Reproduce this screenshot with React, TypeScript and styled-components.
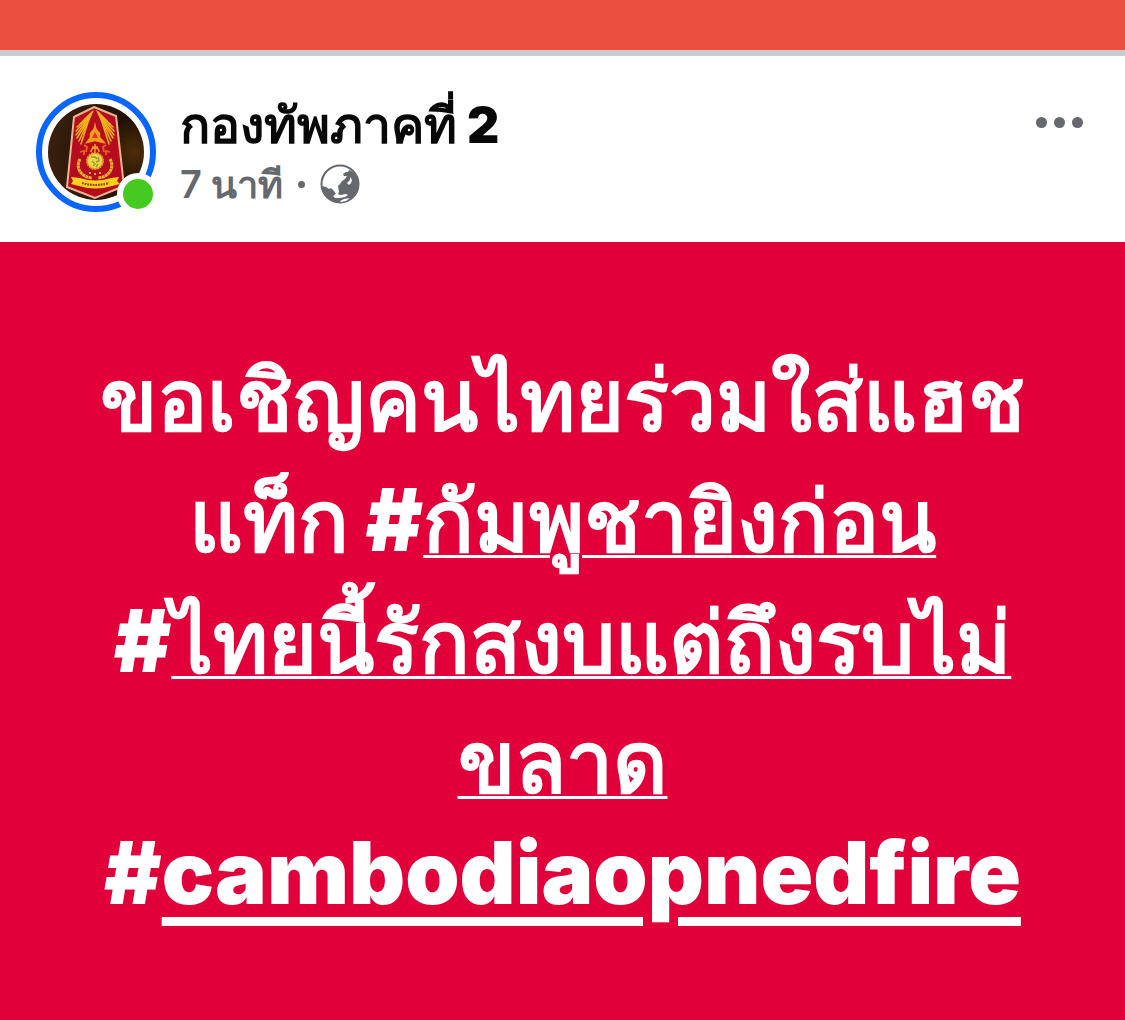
import React from "react";
import styled, { createGlobalStyle } from "styled-components";

const GlobalStyle = createGlobalStyle`
  *, *::before, *::after { box-sizing: border-box; }
  body {
    margin: 0;
    background: #ffffff;
    font-family: Inter, Waree, sans-serif;
  }
`;

const Page = styled.div`
  display: flex;
  flex-direction: column;
  min-height: 100vh;
`;

const TopBanner = styled.div`
  height: 56px;
  background: #eb4f3f;
  border-bottom: 6px solid #c9cbd0;
`;

const Post = styled.article`
  flex: 1;
  display: flex;
  flex-direction: column;
`;

const PostHeader = styled.header`
  display: flex;
  align-items: flex-start;
  gap: 24px;
  padding: 36px 36px 30px;
`;

const AvatarLink = styled.a`
  position: relative;
  flex: none;
  display: block;
  width: 120px;
  height: 120px;
  padding: 6px;
  border: 6px solid #0866ff;
  border-radius: 50%;

  svg { display: block; width: 100%; height: 100%; }
`;

const OnlineBadge = styled.span`
  position: absolute;
  right: -9px;
  bottom: -9px;
  width: 42px;
  height: 42px;
  border: 6px solid #ffffff;
  border-radius: 50%;
  background: #45cb20;
`;

const Author = styled.div`
  flex: 1;
  min-width: 0;
`;

const Name = styled.h1`
  margin: 0;
  font-size: 50px;
  font-weight: 900;
  line-height: 66px;
  white-space: nowrap;

  a { color: #080809; text-decoration: none; }
`;

const Meta = styled.div`
  display: flex;
  align-items: center;
  gap: 15px;
  color: #65686c;
  font-size: 38px;
  font-weight: 600;
  line-height: 52px;
  white-space: nowrap;

  svg { width: 40px; height: 40px; }
`;

const Dot = styled.span`
  width: 7px;
  height: 7px;
  border-radius: 50%;
  background: currentColor;
`;

const MenuButton = styled.button`
  display: flex;
  align-items: center;
  gap: 7px;
  height: 60px;
  padding: 0 6px;
  border: 0;
  background: none;
  color: #65686c;
`;

const MenuDot = styled.span`
  width: 11px;
  height: 11px;
  border-radius: 50%;
  background: currentColor;
`;

const PostBody = styled.section`
  flex: 1;
  display: flex;
  flex-direction: column;
  justify-content: center;
  background: #e1003a;
  color: #ffffff;
  text-align: center;
`;

const Message = styled.p`
  margin: 0;
  padding-top: 2px;
  font-size: 84px;
  font-weight: 900;
`;

const Line = styled.span<{ $height: number }>`
  display: block;
  line-height: ${(p) => p.$height}px;
  white-space: nowrap;
`;

const HashTag = styled.a<{ $latin?: boolean }>`
  color: inherit;
  font-size: ${(p) => (p.$latin ? 87 : 84)}px;
  text-decoration: none;

  u {
    text-decoration-line: underline;
    text-decoration-thickness: ${(p) => (p.$latin ? 9 : 3)}px;
    text-underline-offset: ${(p) => (p.$latin ? 13 : 4)}px;
  }
`;

const Hash = styled.span`
  font-size: 87px;
`;

const featherTips = [
  [12, 17], [15, 20], [18, 23], [19, 27], [19, 31], [18, 34], [16, 37], [14, 40],
];

function Wing() {
  return (
    <g stroke="#f3b21c" strokeLinecap="round">
      {featherTips.map(([x, y], n) => (
        <path key={n} strokeWidth="1.500" d={`M${-3 - n * 0.5} ${8 + n * 1.2} L${-x} ${y}`} />
      ))}
      <path d="M-2 7-10 15-7 17z" fill="#f3b21c" strokeWidth="1" />
    </g>
  );
}

function Emblem() {
  return (
    <svg viewBox="0 0 96 96" role="img" aria-label="กองทัพภาคที่ 2">
      <defs>
        <clipPath id="round"><circle cx="48" cy="48" r="48" /></clipPath>
        <radialGradient id="wood" cx="0.9" cy="0.5" r="0.9">
          <stop offset="0" stopColor="#4d2d0a" />
          <stop offset="0.4" stopColor="#201004" />
          <stop offset="1" stopColor="#3a200e" />
        </radialGradient>
      </defs>
      <g clipPath="url(#round)">
        <rect width="96" height="96" fill="url(#wood)" />
        <path d="M46 3 68 12 76 82 47 94 19 83 26 13Z" fill="#b50d1f" stroke="#f0b48c" strokeWidth="2" />
        <g transform="translate(47 0)"><Wing /></g>
        <g transform="translate(47 0) scale(-1 1)"><Wing /></g>
        <path d="M47 14 49 24 53 29 53 33 57 37 59 41 47 38 35 41 38 37 41 33 41 29 45 24Z" fill="#f79c1c" stroke="#b50d1f" strokeWidth="1.500" />
        <path d="M47 28 44 34 50 34Z" fill="#d93520" />
        <path d="M47 40v8M44 43h6M43 48c0-3 2-4 4-4s4 1 4 4" fill="none" stroke="#f0a022" strokeWidth="1.500" />
        <path d="M36 41l3 2-1 5M58 41l-3 2 1 5M32 48l4-1v4M62 48l-4-1v4" fill="none" stroke="#e8641e" strokeWidth="1.800" />
        <g fill="none" stroke="#eab02c" strokeWidth="3" strokeDasharray="3 0.4">
          <path d="M32 55C27 64 33 73 44 74" />
          <path d="M62 55C67 64 61 73 50 74" />
        </g>
        <circle cx="47" cy="57" r="8" fill="#f2d247" stroke="#e09a1c" strokeWidth="2" strokeDasharray="2 0.8" />
        <path d="M43 53h4l2 2M50 53l1 4-3 1M44 57l3 3-2 2M50 60l-2 3" fill="none" stroke="#8f9a2c" strokeWidth="1.400" />
        <circle cx="42" cy="69" r="1" fill="#ffd641" />
        <circle cx="47" cy="70" r="1" fill="#ffd641" />
        <circle cx="52" cy="69" r="1" fill="#ffd641" />
        <path d="M23 73 32 74Q47 79 63 74l8-1-2 4 3 3-8 2Q47 87 31 82l-8-2 2-3z" fill="#ffd11c" />
        <path d="M34 79Q47 83 61 79" fill="none" stroke="#8c4a0a" strokeWidth="2.200" strokeDasharray="1.800 0.900" />
      </g>
    </svg>
  );
}

function Globe() {
  return (
    <svg viewBox="0 0 40 40" role="img" aria-label="สาธารณะ">
      <circle cx="20" cy="20" r="18.500" fill="none" stroke="currentColor" strokeWidth="2" />
      <path fill="currentColor" d="M2 22l4 1 3 2 2-1 3 3 2 3-1 2 4 1 6-2 5-3 6-1-3 6-6 4-7 2-8-2-6-5-4-7z" />
      <path fill="currentColor" d="M18 22l2-2 2-3 3-2 2-3-3 0-1-2 3-2 2 0 1-2 4 2 4 5 2 7-1 8-4 2-4-1-2 2-5 2-4 0-1-3 1-2z" />
      <path fill="#ffffff" d="M13 32l3-2 5 1 5-1 2 1-3 2-5 1-5 0zM20 37l4-2 6-1-4 3-5 1zM27 19l3-3 0-3 2 3-1 3-2 2z" />
    </svg>
  );
}

export default function App() {
  return (
    <>
      <GlobalStyle />
      <Page lang="th">
        <TopBanner />
        <Post>
          <PostHeader>
            <AvatarLink href="#profile">
              <Emblem />
              <OnlineBadge />
            </AvatarLink>
            <Author>
              <Name><a href="#profile">กองทัพภาคที่ 2</a></Name>
              <Meta>
                <span>7 นาที</span>
                <Dot />
                <Globe />
              </Meta>
            </Author>
            <MenuButton type="button" aria-label="เพิ่มเติม">
              <MenuDot /><MenuDot /><MenuDot />
            </MenuButton>
          </PostHeader>
          <PostBody>
            <Message>
              <Line $height={120}>ขอเชิญคนไทยร่วมใส่แฮช</Line>
              <Line $height={120}>
                แท็ก <HashTag href="#tag-1"><Hash>#</Hash><u>กัมพูชายิงก่อน</u></HashTag>
              </Line>
              <HashTag href="#tag-2">
                <Line $height={120}><Hash>#</Hash><u>ไทยนี้รักสงบแต่ถึงรบไม่</u></Line>
                <Line $height={120}><u>ขลาด</u></Line>
              </HashTag>
              <Line $height={102}>
                <HashTag href="#tag-3" $latin>#<u>cambodiaopnedfire</u></HashTag>
              </Line>
            </Message>
          </PostBody>
        </Post>
      </Page>
    </>
  );
}
